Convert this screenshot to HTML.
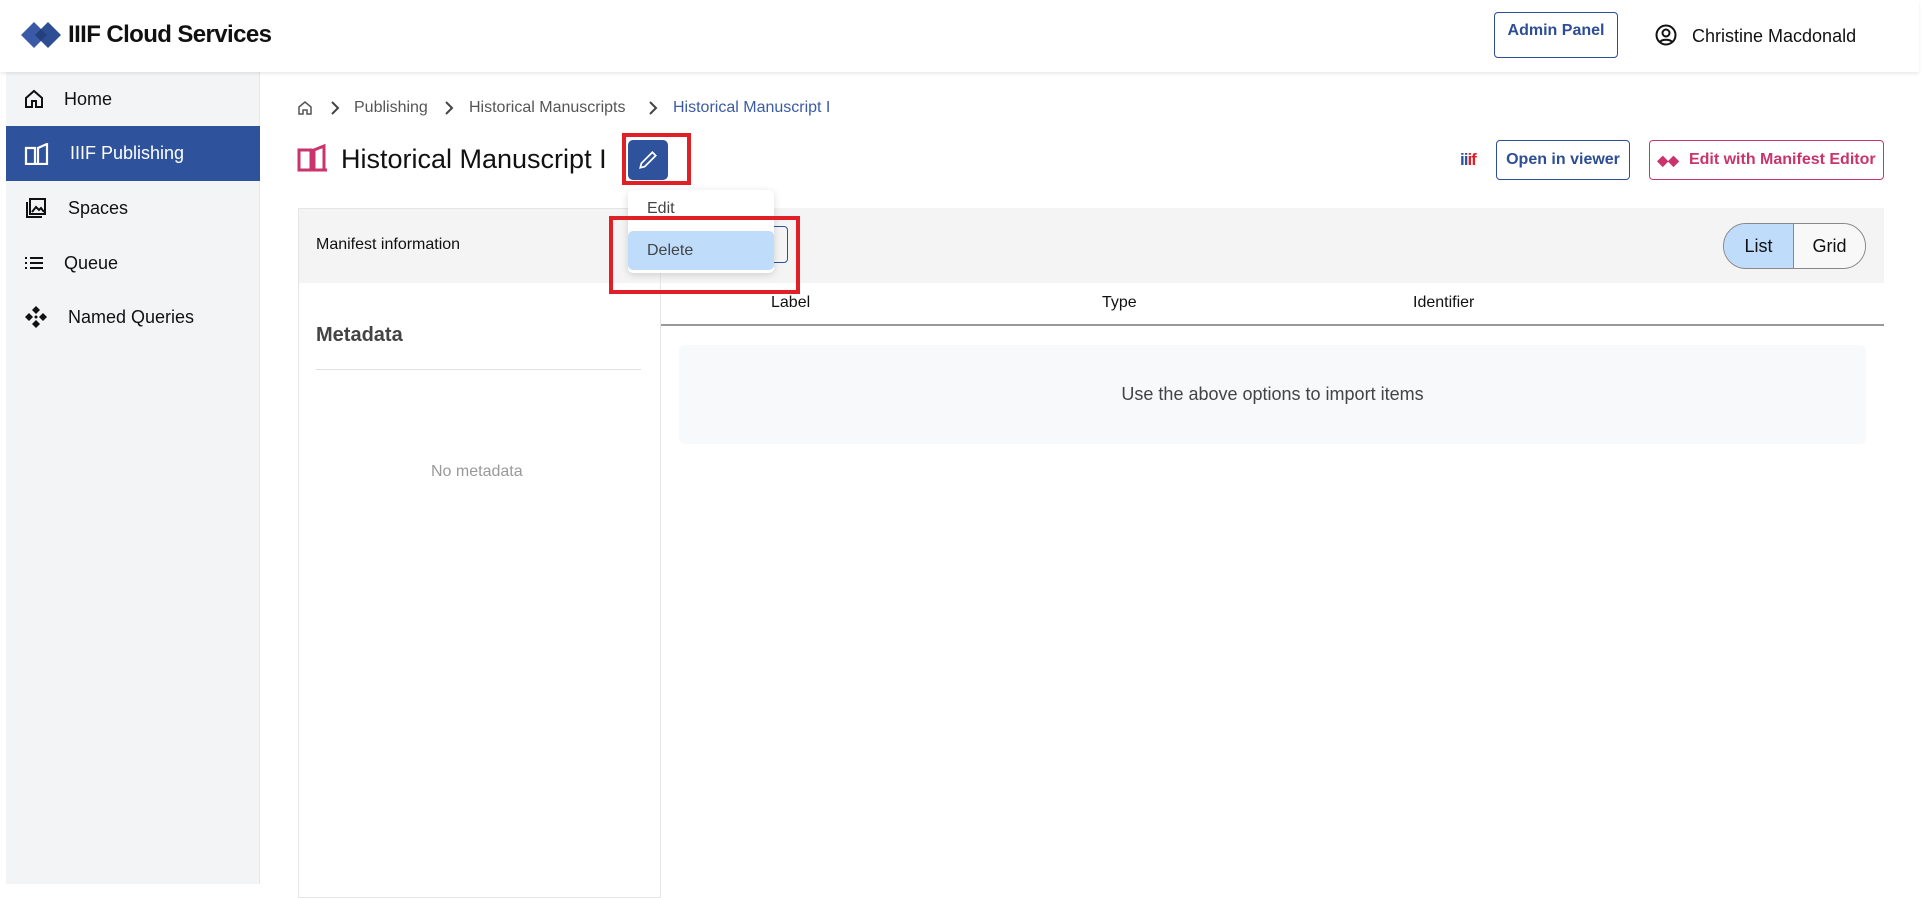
<!DOCTYPE html>
<html><head><meta charset="utf-8"><style>
*{box-sizing:border-box;margin:0;padding:0}
body{width:1924px;height:884px;overflow:hidden;background:#fff;font-family:"Liberation Sans",sans-serif;color:#111;position:relative}
.a{position:absolute}
.hdr{left:0;top:0;width:1919px;height:72px;background:#fff;box-shadow:0 2px 3px rgba(0,0,0,.08);z-index:2}
.side{left:6px;top:72px;width:254px;height:812px;background:#f3f4f6;border-right:1px solid #e5e7eb}
.nav{left:6px;width:254px;height:54px;display:flex;align-items:center;font-size:18px;color:#111}
.nav svg{margin-left:18px;margin-right:20px}
.btn{border:1.5px solid #2d4e94;border-radius:4px;color:#2d4e94;font-weight:bold;font-size:16px;display:flex;align-items:center;justify-content:center}
.bc{font-size:16px;color:#555;top:99px}
</style></head><body>
<div class="a hdr">
 <svg class="a" style="left:21px;top:21px" width="42" height="28" viewBox="0 0 42 28"><path d="M0 14L13 1L26 14L13 27Z" fill="#3a5aa8"/><path d="M14 14L27 1L40 14L27 27Z" fill="#2d4e94"/><path d="M14 14L20 8L26 14L20 20Z" fill="#24407c"/></svg>
 <div class="a" style="left:68px;top:21px;font-size:24px;font-weight:bold;letter-spacing:-0.6px">IIIF Cloud Services</div>
 <div class="a btn" style="left:1494px;top:12px;width:124px;height:46px;align-items:flex-start;padding-top:9px">Admin Panel</div>
 <svg class="a" style="left:1655px;top:24px" width="22" height="22" viewBox="0 0 22 22" fill="none" stroke="#111" stroke-width="2"><circle cx="11" cy="11" r="9.5"/><circle cx="11" cy="9" r="3.5"/><path d="M5 18c2-3 10-3 12 0"/></svg>
 <div class="a" style="left:1692px;top:26px;font-size:18px">Christine Macdonald</div>
</div>
<div class="a side"></div>
<div class="a nav" style="top:72px"><svg width="20" height="20" viewBox="0 0 20 20" fill="none" stroke="#111" stroke-width="2"><path d="M2 9L10 2L18 9V18H12V12H8V18H2Z"/></svg>Home</div>
<div class="a nav" style="top:126px;height:55px;background:#2f529c;color:#fff"><svg width="26" height="22" viewBox="0 0 26 22" fill="none" stroke="#fff" stroke-width="2.2"><path d="M2 5h9v16H2zM14 21V5l9-4v20zM2 21h22"/></svg>IIIF Publishing</div>
<div class="a nav" style="top:181px"><svg width="24" height="24" viewBox="0 0 24 24" fill="none" stroke="#111" stroke-width="2"><rect x="6" y="3" width="15" height="15"/><path d="M3 6v15h15"/><path d="M8 16l4-5 3 3 2-2 3 4" /></svg>Spaces</div>
<div class="a nav" style="top:236px"><svg width="20" height="16" viewBox="0 0 20 16" stroke="#111" stroke-width="2"><path d="M1 3h2M6 3h13M1 8h2M6 8h13M1 13h2M6 13h13"/></svg>Queue</div>
<div class="a nav" style="top:290px"><svg width="24" height="24" viewBox="0 0 24 24" fill="#111"><path d="M12 1l4 4-4 4-4-4zM12 15l4 4-4 4-4-4zM1 12l4-4 4 4-4 4zM15 12l4-4 4 4-4 4z"/><circle cx="12" cy="12" r="1.5"/></svg>Named Queries</div>

<svg class="a" style="left:297px;top:100px" width="16" height="16" viewBox="0 0 16 16" fill="none" stroke="#555" stroke-width="1.5"><path d="M2 7L8 2L14 7V14H10V10H6V14H2Z"/></svg>
<svg class="a" style="left:330px;top:101px" width="10" height="14" viewBox="0 0 10 14" fill="none" stroke="#444" stroke-width="2"><path d="M2 1l6 6-6 6"/></svg>
<div class="a bc" style="left:354px">Publishing</div>
<svg class="a" style="left:444px;top:101px" width="10" height="14" viewBox="0 0 10 14" fill="none" stroke="#444" stroke-width="2"><path d="M2 1l6 6-6 6"/></svg>
<div class="a bc" style="left:469px">Historical Manuscripts</div>
<svg class="a" style="left:648px;top:101px" width="10" height="14" viewBox="0 0 10 14" fill="none" stroke="#444" stroke-width="2"><path d="M2 1l6 6-6 6"/></svg>
<div class="a bc" style="left:673px;color:#3b5ba5">Historical Manuscript I</div>

<svg class="a" style="left:297px;top:144px" width="32" height="28" viewBox="0 0 32 28" fill="none" stroke="#c9346c" stroke-width="3"><path d="M2 6h12v20H2zM17 26V6l10-4v24zM2 26h28"/></svg>
<div class="a" style="left:341px;top:144px;font-size:27px">Historical Manuscript I</div>
<div class="a" style="left:628px;top:140px;width:40px;height:40px;background:#2f529c;border-radius:5px"></div>
<svg class="a" style="left:637px;top:149px" width="22" height="22" viewBox="0 0 20 20" fill="none" stroke="#fff" stroke-width="1.6"><path d="M3 17l1-4L14 3l3 3L7 16z"/></svg>
<div class="a" style="left:622px;top:133px;width:69px;height:52px;border:4px solid #e01f26"></div>

<div class="a" style="left:1460px;top:150px;font-size:17px;font-weight:bold;color:#2f529c;letter-spacing:-1px">ii<span style="color:#e01f26">if</span></div>
<div class="a btn" style="left:1496px;top:140px;width:134px;height:40px">Open in viewer</div>
<div class="a btn" style="left:1649px;top:140px;width:235px;height:40px;border-color:#c9346c;color:#c9346c"><span style="font-size:14px;margin-right:10px">◆◆</span>Edit with Manifest Editor</div>

<div class="a" style="left:298px;top:208px;width:1586px;height:75px;background:#f4f4f4"></div>
<div class="a" style="left:298px;top:208px;width:363px;height:690px;border:1px solid #e5e5e5"></div>
<div class="a" style="left:316px;top:236px;font-size:16px">Manifest information</div>
<div class="a" style="left:740px;top:226px;width:48px;height:37px;border:1.5px solid #2f529c;border-radius:4px"></div>
<div class="a" style="left:1723px;top:223px;width:143px;height:46px;border:1.5px solid #888;border-radius:23px;overflow:hidden;display:flex;font-size:18px">
 <div style="width:70px;background:#bfdcfb;border-right:1.5px solid #888;display:flex;align-items:center;justify-content:center">List</div>
 <div style="flex:1;background:#f8f8f8;display:flex;align-items:center;justify-content:center">Grid</div></div>
<div class="a" style="left:771px;top:294px;font-size:16px">Label</div>
<div class="a" style="left:1102px;top:294px;font-size:16px">Type</div>
<div class="a" style="left:1413px;top:294px;font-size:16px">Identifier</div>
<div class="a" style="left:661px;top:324px;width:1223px;height:2px;background:#999"></div>
<div class="a" style="left:679px;top:345px;width:1187px;height:99px;background:#f8f9fa;border-radius:6px;display:flex;align-items:center;justify-content:center;font-size:18px;color:#444">Use the above options to import items</div>
<div class="a" style="left:316px;top:324px;font-size:20px;font-weight:bold;color:#444">Metadata</div>
<div class="a" style="left:316px;top:369px;width:325px;height:1px;background:#e0e0e0"></div>
<div class="a" style="left:431px;top:463px;font-size:16px;color:#999">No metadata</div>

<div class="a" style="left:628px;top:190px;width:146px;height:83px;background:#fff;border-radius:5px;box-shadow:0 2px 8px rgba(0,0,0,.15)"></div>
<div class="a" style="left:647px;top:200px;font-size:16px;color:#444">Edit</div>
<div class="a" style="left:628px;top:231px;width:146px;height:39px;background:#bfdcfb;border-radius:5px;font-size:16px;color:#444;padding:11px 19px">Delete</div>
<div class="a" style="left:609px;top:216px;width:191px;height:78px;border:4px solid #e01f26"></div>
</body></html>
